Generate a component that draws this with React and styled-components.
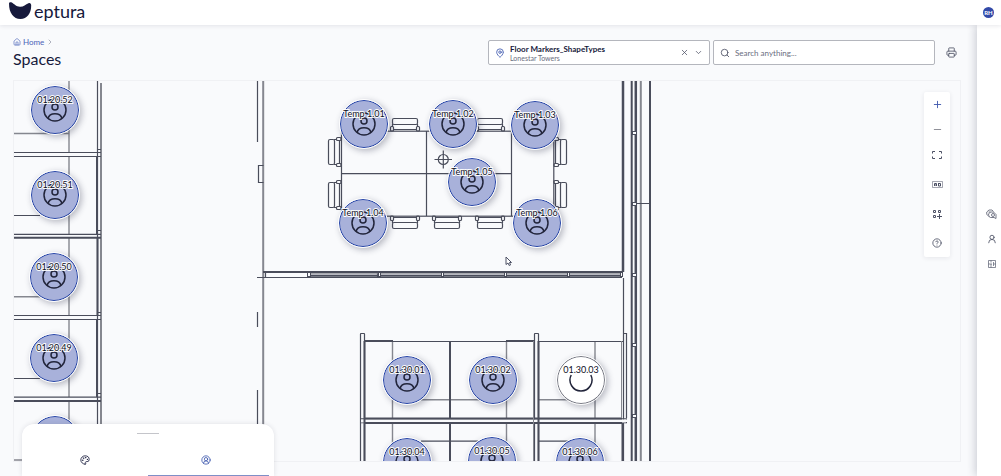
import React from "react";
import styled, { createGlobalStyle } from "styled-components";
import {
  ChevronDown,
  ChevronRight,
  CircleHelp,
  CircleUserRound,
  House,
  MapPin,
  Minus,
  Palette,
  Plus,
  Printer,
  Search,
  UserRound,
  X,
} from "lucide-react";

const GlobalStyle = createGlobalStyle`
  * { box-sizing: border-box; }
  body {
    margin: 0;
    background: #f9fafc;
    color: #16193b;
    font-family: Lato, "Liberation Sans", sans-serif;
  }
  button, input, select { font-family: inherit; color: inherit; }
  button { border: 0; padding: 0; background: none; cursor: pointer; }
`;

const Page = styled.div`
  position: relative;
  display: flex;
  flex-direction: column;
  min-height: 100vh;
  overflow: hidden;
`;

const Header = styled.header`
  position: relative;
  z-index: 2;
  display: flex;
  align-items: center;
  justify-content: space-between;
  height: 25px;
  padding: 0 7px 0 9px;
  background: #fff;
  box-shadow: 0 1px 4px rgba(30, 34, 60, 0.1);
`;

const Brand = styled.a`
  display: flex;
  align-items: center;
  gap: 2px;
  height: 25px;
  padding-bottom: 4px;
  color: #16193b;
  font-size: 18px;
  line-height: 20px;
  text-decoration: none;
`;

const Avatar = styled.button`
  width: 11px;
  height: 11px;
  border-radius: 50%;
  background: #3249a8;
  color: #fff;
  font-size: 6px;
  font-weight: 700;
  line-height: 11px;
`;

const Body = styled.div`
  display: flex;
  flex: 1;
`;

const Main = styled.main`
  display: flex;
  flex: 1;
  flex-direction: column;
  min-width: 0;
  padding: 0 16px 14px 13px;
`;

const TopBar = styled.div`
  display: flex;
  align-items: center;
  height: 55px;
`;

const Heading = styled.div`
  flex: 1;
`;

const Breadcrumb = styled.nav`
  display: flex;
  align-items: center;
  gap: 2px;
  height: 12px;
  color: #8a8ea0;
  a {
    display: flex;
    align-items: center;
    gap: 2px;
    color: #4a63b8;
    font-size: 8px;
    line-height: 12px;
    text-decoration: none;
  }
`;

const Title = styled.h1`
  margin: 0;
  font-size: 16px;
  font-weight: 400;
  line-height: 22px;
`;

const Tools = styled.div`
  display: flex;
  align-items: center;
  gap: 7px;
`;

const Fields = styled.div`
  display: flex;
  gap: 3px;
`;

const Field = styled.div`
  display: flex;
  align-items: center;
  gap: 5px;
  width: 222px;
  height: 25px;
  padding: 0 6px;
  border: 1px solid #b4b6bd;
  border-radius: 2px;
  background: #fff;
  color: #4c5064;
  svg { flex: none; }
`;

const FieldText = styled.div`
  display: flex;
  flex: 1;
  flex-direction: column;
  min-width: 0;
  span {
    color: #6a6e80;
    font-size: 7px;
    line-height: 8px;
  }
`;

const FloorSelect = styled.select`
  width: 100%;
  height: 10px;
  padding: 0;
  border: 0;
  appearance: none;
  background: transparent;
  color: #16193b;
  font-size: 8px;
  font-weight: 700;
  line-height: 10px;
`;

const SearchInput = styled.input`
  flex: 1;
  min-width: 0;
  padding: 0;
  border: 0;
  background: transparent;
  font-size: 8px;
  &::placeholder { color: #6a6e80; opacity: 1; }
`;

const IconButton = styled.button`
  display: grid;
  place-items: center;
  width: ${(p) => p.$w || 16}px;
  height: ${(p) => p.$h || 16}px;
  color: ${(p) => p.$color || "#4c5064"};
`;

const Map = styled.section`
  position: relative;
  flex: 1;
  overflow: hidden;
  border: 1px solid #f0f1f4;
  min-height: 240px;
`;

const Plan = styled.svg`
  position: absolute;
  inset: 0;
  display: block;
`;

const Pin = styled.button`
  position: absolute;
  left: ${(p) => p.$x - 38}px;
  top: ${(p) => p.$y - 105}px;
  width: 48px;
  height: 48px;
  border: 1px solid ${(p) => (p.$free ? "#777983" : "#2443a8")};
  border-radius: 50%;
  outline: 1px solid #fff;
  background: ${(p) => (p.$free ? "#fff" : "#a8b1da")};
  box-shadow: 2px 2px 6px 1px rgba(30, 34, 60, 0.3);
  display: grid;
  place-items: center;
`;

const PinLabel = styled.span`
  position: absolute;
  top: 7px;
  left: 0;
  right: 0;
  color: #0c0e24;
  font-size: 9px;
  line-height: 12px;
  text-align: center;
  white-space: nowrap;
  -webkit-text-stroke: 2px rgba(255, 255, 255, 0.95);
  paint-order: stroke fill;
`;

const MapControls = styled.div`
  position: absolute;
  top: 11px;
  right: 10px;
  display: flex;
  flex-direction: column;
  align-items: center;
  gap: 3px;
  width: 26px;
  border-radius: 2px;
  background: #fff;
  box-shadow: 0 1px 5px rgba(30, 34, 60, 0.09);
`;

const ControlGroup = styled.div`
  display: flex;
  flex-direction: column;
`;

const Rail = styled.aside`
  display: flex;
  flex: none;
  flex-direction: column;
  align-items: center;
  gap: 9px;
  width: 24px;
  padding: 181px 0 0 5px;
  background: #fff;
  box-shadow: -2px 0 9px rgba(30, 34, 60, 0.2);
`;

const Sheet = styled.div`
  position: absolute;
  bottom: 0;
  left: 22px;
  z-index: 3;
  display: flex;
  flex-direction: column;
  justify-content: space-between;
  width: 252px;
  height: 52px;
  padding: 9px 5px 0;
  border-radius: 12px 12px 0 0;
  background: #fff;
  box-shadow: 0 0 5px rgba(30, 34, 60, 0.12);
`;

const Handle = styled.div`
  align-self: center;
  width: 22px;
  height: 1px;
  background: #c4c5ca;
`;

const Tabs = styled.div`
  display: flex;
`;

const Tab = styled.button`
  display: grid;
  flex: 1;
  place-items: center;
  height: 32px;
  padding-right: 6px;
  border-bottom: 1px solid ${(p) => (p.$active ? "#7f8fc7" : "transparent")};
  color: ${(p) => (p.$active ? "#3f59ae" : "#16193b")};
`;

const Cursor = styled.svg`
  position: absolute;
  left: 491px;
  top: 175px;
`;

const pins = [
  ["01.20.52", 55, 110], ["01.20.51", 55, 195], ["01.20.50", 54, 277],
  ["01.20.49", 54, 358], ["01.20.48", 55, 440],
  ["Temp 1.01", 364, 124], ["Temp 1.02", 453, 124], ["Temp 1.03", 535, 125],
  ["Temp 1.04", 363, 223], ["Temp 1.05", 472, 182], ["Temp 1.06", 537, 223],
  ["01.30.01", 407, 380], ["01.30.02", 493, 380], ["01.30.03", 581, 380, true],
  ["01.30.04", 407, 462], ["01.30.05", 492, 461], ["01.30.06", 580, 462],
];

function Marker({ name, x, y, free }) {
  return (
    <Pin $x={x} $y={y} $free={free} aria-label={name}>
      <svg width="26" height="26" viewBox="-13 -13 26 26" fill="none" stroke="#22253b" strokeWidth="1.500">
        {free ? <path d="M-9.800 -5A11 11 0 1 0 9.800 -5" /> : <circle r="11" />}
        {!free && <circle cy="-3" r="3" />}
        {!free && <path d="M-7 8.500C-5.500 2 5.500 2 7 8.500" />}
      </svg>
      <PinLabel>{name}</PinLabel>
    </Pin>
  );
}

/* A chair whose open side rests on the table edge at (x, y). */
function Chair({ x, y, turn = 0 }) {
  return (
    <g transform={`translate(${x} ${y}) rotate(${turn})`}>
      <rect x="-12.500" y="-12.500" width="25" height="6" rx="1.500" />
      <path d="M-12.500 -7V-4M12.500 -7V-4M-11 -1.500H11" />
      <rect x="-14.500" y="-4.500" width="3" height="4.500" rx="1" />
      <rect x="11.500" y="-4.500" width="3" height="4.500" rx="1" />
    </g>
  );
}

function FloorPlan() {
  return (
    <Plan width="947" height="380" fill="none" stroke="#4a4d5b" aria-hidden="true">
      <g transform="translate(-14 -81)">
        <g stroke="#85878f" strokeWidth="1.400">
          <path d="M69 80V152M69 157V234M69 238V315M69 320V397M69 401V461" />
          <path d="M14 133.500H69M14 296.700H40M14 460H40" />
          <path d="M392.500 341V418M392.500 423V461M506.500 341V418M506.500 423V461M595 341V418M595 423V461" />
          <path d="M421 399.800H480M539 399.800H570" />
        </g>
        <g stroke="#85878f" strokeWidth="2">
          <path d="M101 83V461M263.200 81V461M640.800 81V461" />
        </g>
        <g strokeWidth="1.200">
          <path d="M97.500 81V461M14 152.500H101M14 156.500H101M14 215.500H40M14 234.300H101M14 315.500H101M14 319.500H101M14 378.500H40M14 397.200H101" />
          <path d="M98 149.500H101M98 230.500H101M98 312.500H101M98 393.500H101" />
          <path d="M257.500 81V142M257.500 312V327M257.500 390V461M263.500 165.500H258.500V182.500H263.500" />
          <path d="M257 277.500H622M265.500 272V277M377.500 272V277M379.500 272V277" />
          <path d="M637 203.500H650M361 418.800H627M361 422.700H627" />
          <path d="M392 341.500H507M539 341.500H623M421 441.200H478M539 441.200H570" />
          <rect x="360.500" y="333.500" width="4" height="130" rx=".5" />
          <rect x="534.500" y="333.500" width="4" height="130" rx=".5" />
          <path d="M623.500 278V461M623.500 333.500H626.500V418" />
          <rect x="361" y="419.500" width="265" height="3" fill="#f9fafc" stroke="none" />
        </g>
        <g strokeWidth="2">
          <path d="M97 157V234M97.500 238V315M97 320V397M14 237.700H101M14 401H101" />
          <path d="M263 272H623M309 275.800H621M650 81V461M631.700 81V461" />
          <path d="M364 341H393M506 341H535M364.500 341V461M450 341V418M450 423V461M538.500 341V461M622.500 423V461M364 418.500H622M364 423H622" />
        </g>
        <path stroke="#85878f" d="M309 273.800H621M533.500 341V461M621.500 341V418" />
        <path strokeWidth="2.500" d="M623 81V272M635.800 81V461" />
        <g fill="#f9fafc" strokeWidth="1">
          <rect x="307.500" y="272.500" width="3" height="4" />
          <rect x="378.500" y="272.500" width="2" height="4" />
          <rect x="441.500" y="272.500" width="2" height="4" />
          <rect x="504.500" y="272.500" width="2" height="4" />
          <rect x="567.500" y="272.500" width="2" height="4" />
          <rect x="620.500" y="272.500" width="2" height="4" />
          {[133, 204, 275, 345, 416].map((y) => (
            <rect key={y} x="632.500" y={y - 1.5} width="4" height="3" />
          ))}
        </g>
        <g strokeWidth="1.200">
          <rect x="341.500" y="131.200" width="212.300" height="85" />
          <path d="M341 173.700H511.500M426.500 131V216M511.500 131V216" />
          <Chair x={405} y={131} />
          <Chair x={490} y={131} />
          <Chair x={405} y={216} turn={180} />
          <Chair x={447} y={216} turn={180} />
          <Chair x={490} y={216} turn={180} />
          <Chair x={341} y={152} turn={-90} />
          <Chair x={341} y={195} turn={-90} />
          <Chair x={554} y={152} turn={90} />
          <Chair x={554} y={195} turn={90} />
          <circle cx="443.300" cy="159.500" r="5" />
          <path d="M434.500 159.500H452M443.300 150.500V168.500" />
        </g>
      </g>
    </Plan>
  );
}

const FitIcon = () => (
  <svg width="10" height="8" viewBox="0 0 10 8" fill="none" stroke="currentColor" strokeWidth="1">
    <path d="M3 .5H.5V2.500M7 .5H9.500V2.500M3 7.500H.5V5.500M7 7.500H9.500V5.500" />
  </svg>
);

const LabelIcon = () => (
  <svg width="11" height="9" viewBox="0 0 11 9" fill="none" stroke="currentColor" strokeWidth="1">
    <path d="M.5 1.500H10.500V7.500H.5Z" opacity=".5" />
    <path d="M2.500 6V3.500H4.500V6M2.500 5H4.500M6.500 3V6H8.500V3.500H6.500" />
  </svg>
);

const GridPlusIcon = () => (
  <svg width="10" height="10" viewBox="0 0 10 10" fill="none" stroke="currentColor" strokeWidth="1">
    <path d="M1.500 1.500H3.500V3.500H1.500ZM6.500 1.500H8.500V3.500H6.500ZM1.500 6.500H3.500V8.500H1.500ZM7.500 5V10M5 7.500H10" />
  </svg>
);

const BubblesIcon = () => (
  <svg width="11" height="11" viewBox="0 0 22 22" fill="none" stroke="currentColor" strokeWidth="1.500">
    <path d="M4 13L1.500 11V6L6 2H12L15 5M6 16L5 10L9 6H15L20 11V19L16 17H9L6 15" />
    <circle cx="14" cy="12" r="3" />
    <path d="M5 6H9" />
  </svg>
);

const FloorIcon = () => (
  <svg width="8" height="8" viewBox="0 0 16 16" fill="none" stroke="currentColor" strokeWidth="1.300">
    <path d="M1 1H15V15H1ZM6 1V5M6 8V15M1 8H8M11 4V12M11 8H15" />
  </svg>
);

export default function App() {
  return (
    <>
      <GlobalStyle />
      <Page>
        <Header>
          <Brand href="#home">
            <svg width="23" height="18" viewBox="0 0 23 18" fill="#16193b" aria-hidden="true">
              <path d="M0 1.500C0 .3 1.500-.2 2.800.5C5 1.700 7 4.600 11 4.800C14.500 5 16.500 2.200 19.500 1.200C21.200.7 22.200 1.700 22.200 3.500C22.200 11.500 18 17 11.500 17C4.500 17 0 11 0 1.500Z" />
            </svg>
            eptura
          </Brand>
          <Avatar aria-label="Account">RH</Avatar>
        </Header>
        <Body>
          <Main>
            <TopBar>
              <Heading>
                <Breadcrumb aria-label="Breadcrumb">
                  <a href="#home"><House size={8} />Home</a>
                  <ChevronRight size={8} />
                </Breadcrumb>
                <Title>Spaces</Title>
              </Heading>
              <Tools>
                <Fields>
                  <Field>
                    <MapPin size={10} color="#3f59ae" />
                    <FieldText>
                      <FloorSelect aria-label="Floor">
                        <option>Floor Markers_ShapeTypes</option>
                      </FloorSelect>
                      <span>Lonestar Towers</span>
                    </FieldText>
                    <IconButton $w={9} aria-label="Clear floor"><X size={9} strokeWidth={2} /></IconButton>
                    <ChevronDown size={9} strokeWidth={2} />
                  </Field>
                  <Field>
                    <Search size={10} strokeWidth={2} />
                    <SearchInput aria-label="Search" placeholder="Search anything..." />
                  </Field>
                </Fields>
                <IconButton $w={19} aria-label="Print"><Printer size={11} strokeWidth={1.8} /></IconButton>
              </Tools>
            </TopBar>
            <Map aria-label="Floor map">
              <FloorPlan />
              {pins.map(([name, x, y, free]) => (
                <Marker key={name} name={name} x={x} y={y} free={free} />
              ))}
              <Cursor width="8" height="11" viewBox="0 0 8 11" fill="#fff" stroke="#4c5064" aria-hidden="true">
                <path d="M1 1V8.500L3 7L4.200 9.500L5.500 9L4.500 6.500H6.500Z" />
              </Cursor>
              <MapControls>
                <ControlGroup>
                  <IconButton $h={25} $color="#3f59ae" aria-label="Zoom in"><Plus size={11} strokeWidth={2} /></IconButton>
                  <IconButton $h={25} $color="#85878f" aria-label="Zoom out"><Minus size={11} strokeWidth={2} /></IconButton>
                  <IconButton $h={25} aria-label="Fit to screen"><FitIcon /></IconButton>
                </ControlGroup>
                <ControlGroup>
                  <IconButton $h={29} aria-label="Labels"><LabelIcon /></IconButton>
                  <IconButton $h={29} aria-label="Add widget"><GridPlusIcon /></IconButton>
                  <IconButton $h={29} aria-label="Help"><CircleHelp size={10} strokeWidth={2} /></IconButton>
                </ControlGroup>
              </MapControls>
            </Map>
          </Main>
          <Rail>
            <IconButton aria-label="Bookings"><BubblesIcon /></IconButton>
            <IconButton aria-label="People"><UserRound size={10} strokeWidth={2} /></IconButton>
            <IconButton aria-label="Floors"><FloorIcon /></IconButton>
          </Rail>
        </Body>
        <Sheet>
          <Handle />
          <Tabs role="tablist">
            <Tab role="tab" aria-label="Theme"><Palette size={10} /></Tab>
            <Tab role="tab" aria-label="Occupancy" aria-selected="true" $active><CircleUserRound size={10} /></Tab>
          </Tabs>
        </Sheet>
      </Page>
    </>
  );
}
